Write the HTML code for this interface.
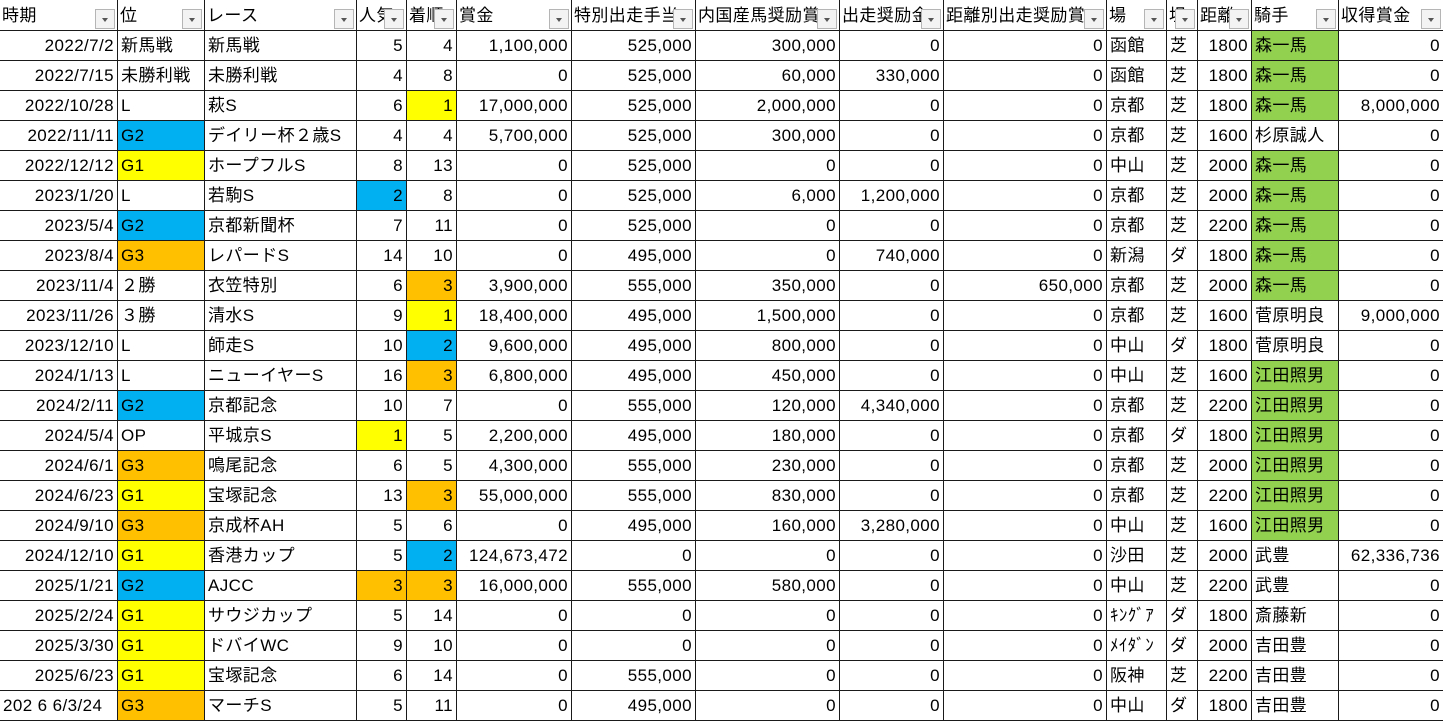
<!DOCTYPE html>
<html><head><meta charset="utf-8"><style>
*{box-sizing:border-box;margin:0;padding:0}
body{width:1443px;height:721px;overflow:hidden;background:#fff;font-family:"Liberation Sans","Noto Sans CJK JP",sans-serif;font-size:17px;letter-spacing:0.4px;color:#000}
.r{display:flex;height:30px;border-bottom:1px solid #1a1a1a}
.h{height:31px}
.r>div{border-right:1px solid #1a1a1a;height:100%;line-height:30px;white-space:nowrap;overflow:hidden;position:relative;padding:0 3px}
.r>div:last-child{border-right:none}
.n{text-align:right}
.c1{width:118px}.c2{width:87px}.c3{width:152px}.c4{width:50px}.c5{width:50px}.c6{width:115px}.c7{width:124px}.c8{width:144px}.c9{width:104px}.c10{width:163px}.c11{width:60px}.c12{width:31px}.c13{width:54px}.c14{width:87px}.c15{width:104px}
.h>div{padding-left:2px;line-height:31px}
.h>div i{position:absolute;right:2px;top:9px;width:20px;height:20px;background:#f3f3f3;border:1px solid #b5b5b5}
.h>div i:after{content:"";position:absolute;left:6px;top:8px;border-left:3.5px solid transparent;border-right:3.5px solid transparent;border-top:4px solid #555}
.B{background:#00b0f0}.Y{background:#ffff00}.O{background:#ffc000}.G{background:#92d050}
</style></head><body>
<div class="r h"><div class="c1">時期<i></i></div><div class="c2">位<i></i></div><div class="c3">レース<i></i></div><div class="c4">人気<i></i></div><div class="c5">着順<i></i></div><div class="c6">賞金<i></i></div><div class="c7">特別出走手当<i></i></div><div class="c8">内国産馬奨励賞<i></i></div><div class="c9">出走奨励金<i></i></div><div class="c10">距離別出走奨励賞<i></i></div><div class="c11">場<i></i></div><div class="c12">坦<i></i></div><div class="c13">距離<i></i></div><div class="c14">騎手<i></i></div><div class="c15">収得賞金<i></i></div></div>
<div class="r"><div class="c1 n">2022/7/2</div><div class="c2">新馬戦</div><div class="c3">新馬戦</div><div class="c4 n">5</div><div class="c5 n">4</div><div class="c6 n">1,100,000</div><div class="c7 n">525,000</div><div class="c8 n">300,000</div><div class="c9 n">0</div><div class="c10 n">0</div><div class="c11">函館</div><div class="c12">芝</div><div class="c13 n">1800</div><div class="c14 G">森一馬</div><div class="c15 n">0</div></div>
<div class="r"><div class="c1 n">2022/7/15</div><div class="c2">未勝利戦</div><div class="c3">未勝利戦</div><div class="c4 n">4</div><div class="c5 n">8</div><div class="c6 n">0</div><div class="c7 n">525,000</div><div class="c8 n">60,000</div><div class="c9 n">330,000</div><div class="c10 n">0</div><div class="c11">函館</div><div class="c12">芝</div><div class="c13 n">1800</div><div class="c14 G">森一馬</div><div class="c15 n">0</div></div>
<div class="r"><div class="c1 n">2022/10/28</div><div class="c2">L</div><div class="c3">萩S</div><div class="c4 n">6</div><div class="c5 n Y">1</div><div class="c6 n">17,000,000</div><div class="c7 n">525,000</div><div class="c8 n">2,000,000</div><div class="c9 n">0</div><div class="c10 n">0</div><div class="c11">京都</div><div class="c12">芝</div><div class="c13 n">1800</div><div class="c14 G">森一馬</div><div class="c15 n">8,000,000</div></div>
<div class="r"><div class="c1 n">2022/11/11</div><div class="c2 B">G2</div><div class="c3">デイリー杯２歳S</div><div class="c4 n">4</div><div class="c5 n">4</div><div class="c6 n">5,700,000</div><div class="c7 n">525,000</div><div class="c8 n">300,000</div><div class="c9 n">0</div><div class="c10 n">0</div><div class="c11">京都</div><div class="c12">芝</div><div class="c13 n">1600</div><div class="c14">杉原誠人</div><div class="c15 n">0</div></div>
<div class="r"><div class="c1 n">2022/12/12</div><div class="c2 Y">G1</div><div class="c3">ホープフルS</div><div class="c4 n">8</div><div class="c5 n">13</div><div class="c6 n">0</div><div class="c7 n">525,000</div><div class="c8 n">0</div><div class="c9 n">0</div><div class="c10 n">0</div><div class="c11">中山</div><div class="c12">芝</div><div class="c13 n">2000</div><div class="c14 G">森一馬</div><div class="c15 n">0</div></div>
<div class="r"><div class="c1 n">2023/1/20</div><div class="c2">L</div><div class="c3">若駒S</div><div class="c4 n B">2</div><div class="c5 n">8</div><div class="c6 n">0</div><div class="c7 n">525,000</div><div class="c8 n">6,000</div><div class="c9 n">1,200,000</div><div class="c10 n">0</div><div class="c11">京都</div><div class="c12">芝</div><div class="c13 n">2000</div><div class="c14 G">森一馬</div><div class="c15 n">0</div></div>
<div class="r"><div class="c1 n">2023/5/4</div><div class="c2 B">G2</div><div class="c3">京都新聞杯</div><div class="c4 n">7</div><div class="c5 n">11</div><div class="c6 n">0</div><div class="c7 n">525,000</div><div class="c8 n">0</div><div class="c9 n">0</div><div class="c10 n">0</div><div class="c11">京都</div><div class="c12">芝</div><div class="c13 n">2200</div><div class="c14 G">森一馬</div><div class="c15 n">0</div></div>
<div class="r"><div class="c1 n">2023/8/4</div><div class="c2 O">G3</div><div class="c3">レパードS</div><div class="c4 n">14</div><div class="c5 n">10</div><div class="c6 n">0</div><div class="c7 n">495,000</div><div class="c8 n">0</div><div class="c9 n">740,000</div><div class="c10 n">0</div><div class="c11">新潟</div><div class="c12">ダ</div><div class="c13 n">1800</div><div class="c14 G">森一馬</div><div class="c15 n">0</div></div>
<div class="r"><div class="c1 n">2023/11/4</div><div class="c2">２勝</div><div class="c3">衣笠特別</div><div class="c4 n">6</div><div class="c5 n O">3</div><div class="c6 n">3,900,000</div><div class="c7 n">555,000</div><div class="c8 n">350,000</div><div class="c9 n">0</div><div class="c10 n">650,000</div><div class="c11">京都</div><div class="c12">芝</div><div class="c13 n">2000</div><div class="c14 G">森一馬</div><div class="c15 n">0</div></div>
<div class="r"><div class="c1 n">2023/11/26</div><div class="c2">３勝</div><div class="c3">清水S</div><div class="c4 n">9</div><div class="c5 n Y">1</div><div class="c6 n">18,400,000</div><div class="c7 n">495,000</div><div class="c8 n">1,500,000</div><div class="c9 n">0</div><div class="c10 n">0</div><div class="c11">京都</div><div class="c12">芝</div><div class="c13 n">1600</div><div class="c14">菅原明良</div><div class="c15 n">9,000,000</div></div>
<div class="r"><div class="c1 n">2023/12/10</div><div class="c2">L</div><div class="c3">師走S</div><div class="c4 n">10</div><div class="c5 n B">2</div><div class="c6 n">9,600,000</div><div class="c7 n">495,000</div><div class="c8 n">800,000</div><div class="c9 n">0</div><div class="c10 n">0</div><div class="c11">中山</div><div class="c12">ダ</div><div class="c13 n">1800</div><div class="c14">菅原明良</div><div class="c15 n">0</div></div>
<div class="r"><div class="c1 n">2024/1/13</div><div class="c2">L</div><div class="c3">ニューイヤーS</div><div class="c4 n">16</div><div class="c5 n O">3</div><div class="c6 n">6,800,000</div><div class="c7 n">495,000</div><div class="c8 n">450,000</div><div class="c9 n">0</div><div class="c10 n">0</div><div class="c11">中山</div><div class="c12">芝</div><div class="c13 n">1600</div><div class="c14 G">江田照男</div><div class="c15 n">0</div></div>
<div class="r"><div class="c1 n">2024/2/11</div><div class="c2 B">G2</div><div class="c3">京都記念</div><div class="c4 n">10</div><div class="c5 n">7</div><div class="c6 n">0</div><div class="c7 n">555,000</div><div class="c8 n">120,000</div><div class="c9 n">4,340,000</div><div class="c10 n">0</div><div class="c11">京都</div><div class="c12">芝</div><div class="c13 n">2200</div><div class="c14 G">江田照男</div><div class="c15 n">0</div></div>
<div class="r"><div class="c1 n">2024/5/4</div><div class="c2">OP</div><div class="c3">平城京S</div><div class="c4 n Y">1</div><div class="c5 n">5</div><div class="c6 n">2,200,000</div><div class="c7 n">495,000</div><div class="c8 n">180,000</div><div class="c9 n">0</div><div class="c10 n">0</div><div class="c11">京都</div><div class="c12">ダ</div><div class="c13 n">1800</div><div class="c14 G">江田照男</div><div class="c15 n">0</div></div>
<div class="r"><div class="c1 n">2024/6/1</div><div class="c2 O">G3</div><div class="c3">鳴尾記念</div><div class="c4 n">6</div><div class="c5 n">5</div><div class="c6 n">4,300,000</div><div class="c7 n">555,000</div><div class="c8 n">230,000</div><div class="c9 n">0</div><div class="c10 n">0</div><div class="c11">京都</div><div class="c12">芝</div><div class="c13 n">2000</div><div class="c14 G">江田照男</div><div class="c15 n">0</div></div>
<div class="r"><div class="c1 n">2024/6/23</div><div class="c2 Y">G1</div><div class="c3">宝塚記念</div><div class="c4 n">13</div><div class="c5 n O">3</div><div class="c6 n">55,000,000</div><div class="c7 n">555,000</div><div class="c8 n">830,000</div><div class="c9 n">0</div><div class="c10 n">0</div><div class="c11">京都</div><div class="c12">芝</div><div class="c13 n">2200</div><div class="c14 G">江田照男</div><div class="c15 n">0</div></div>
<div class="r"><div class="c1 n">2024/9/10</div><div class="c2 O">G3</div><div class="c3">京成杯AH</div><div class="c4 n">5</div><div class="c5 n">6</div><div class="c6 n">0</div><div class="c7 n">495,000</div><div class="c8 n">160,000</div><div class="c9 n">3,280,000</div><div class="c10 n">0</div><div class="c11">中山</div><div class="c12">芝</div><div class="c13 n">1600</div><div class="c14 G">江田照男</div><div class="c15 n">0</div></div>
<div class="r"><div class="c1 n">2024/12/10</div><div class="c2 Y">G1</div><div class="c3">香港カップ</div><div class="c4 n">5</div><div class="c5 n B">2</div><div class="c6 n">124,673,472</div><div class="c7 n">0</div><div class="c8 n">0</div><div class="c9 n">0</div><div class="c10 n">0</div><div class="c11">沙田</div><div class="c12">芝</div><div class="c13 n">2000</div><div class="c14">武豊</div><div class="c15 n">62,336,736</div></div>
<div class="r"><div class="c1 n">2025/1/21</div><div class="c2 B">G2</div><div class="c3">AJCC</div><div class="c4 n O">3</div><div class="c5 n O">3</div><div class="c6 n">16,000,000</div><div class="c7 n">555,000</div><div class="c8 n">580,000</div><div class="c9 n">0</div><div class="c10 n">0</div><div class="c11">中山</div><div class="c12">芝</div><div class="c13 n">2200</div><div class="c14">武豊</div><div class="c15 n">0</div></div>
<div class="r"><div class="c1 n">2025/2/24</div><div class="c2 Y">G1</div><div class="c3">サウジカップ</div><div class="c4 n">5</div><div class="c5 n">14</div><div class="c6 n">0</div><div class="c7 n">0</div><div class="c8 n">0</div><div class="c9 n">0</div><div class="c10 n">0</div><div class="c11">ｷﾝｸﾞｱ</div><div class="c12">ダ</div><div class="c13 n">1800</div><div class="c14">斎藤新</div><div class="c15 n">0</div></div>
<div class="r"><div class="c1 n">2025/3/30</div><div class="c2 Y">G1</div><div class="c3">ドバイWC</div><div class="c4 n">9</div><div class="c5 n">10</div><div class="c6 n">0</div><div class="c7 n">0</div><div class="c8 n">0</div><div class="c9 n">0</div><div class="c10 n">0</div><div class="c11">ﾒｲﾀﾞﾝ</div><div class="c12">ダ</div><div class="c13 n">2000</div><div class="c14">吉田豊</div><div class="c15 n">0</div></div>
<div class="r"><div class="c1 n">2025/6/23</div><div class="c2 Y">G1</div><div class="c3">宝塚記念</div><div class="c4 n">6</div><div class="c5 n">14</div><div class="c6 n">0</div><div class="c7 n">555,000</div><div class="c8 n">0</div><div class="c9 n">0</div><div class="c10 n">0</div><div class="c11">阪神</div><div class="c12">芝</div><div class="c13 n">2200</div><div class="c14">吉田豊</div><div class="c15 n">0</div></div>
<div class="r"><div class="c1">202 6 6/3/24</div><div class="c2 O">G3</div><div class="c3">マーチS</div><div class="c4 n">5</div><div class="c5 n">11</div><div class="c6 n">0</div><div class="c7 n">495,000</div><div class="c8 n">0</div><div class="c9 n">0</div><div class="c10 n">0</div><div class="c11">中山</div><div class="c12">ダ</div><div class="c13 n">1800</div><div class="c14">吉田豊</div><div class="c15 n">0</div></div>
</body></html>
